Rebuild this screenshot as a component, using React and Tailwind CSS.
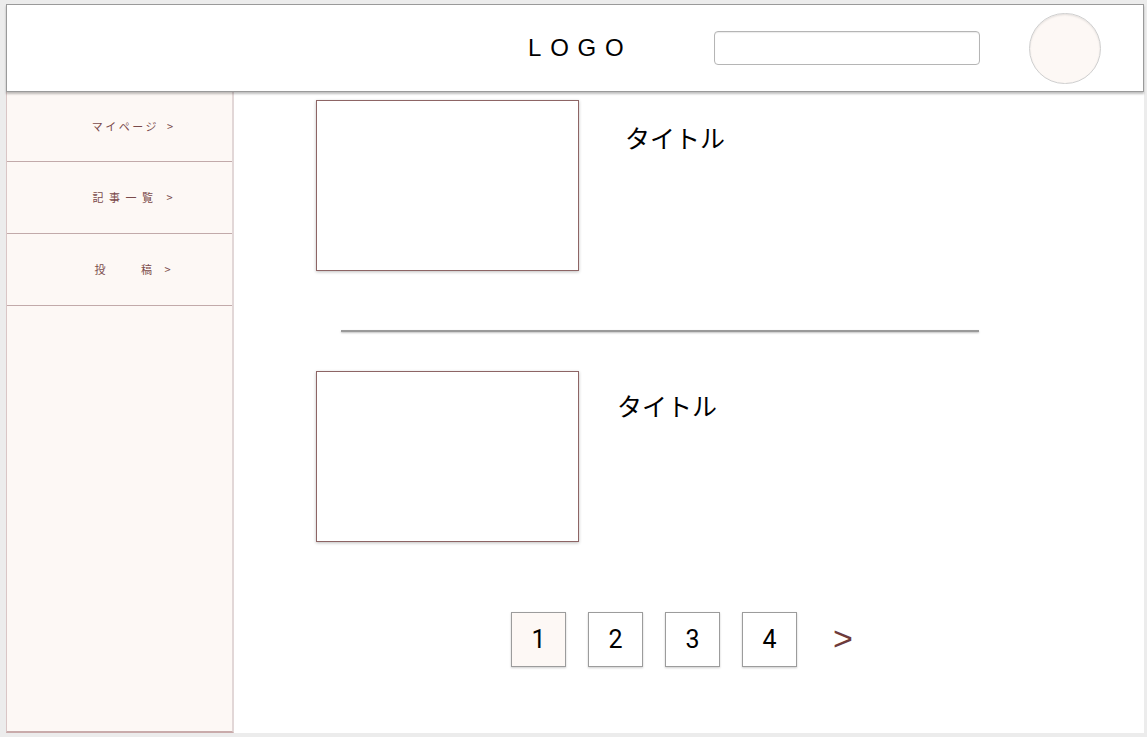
import React from 'react';

const menu = [
    { label: 'マイページ', h: 'h-[70px]', track: 'tracking-[2.5px]' },
    { label: '記事一覧', h: 'h-[72px]', track: 'tracking-[5.5px]' },
    { label: '投\u3000\u3000稿', h: 'h-[72px]', track: 'tracking-[4.5px]' },
];

const posts = [
    { id: 1, titleClass: 'ml-[46px] mt-[20px]' },
    { id: 2, titleClass: 'ml-[38px] mt-[17px]' },
];

const Header = () => (
    <header className="h-[88px] bg-white border border-[#9a9a9a] shadow-[0_2px_2px_rgba(0,0,0,0.25)] flex items-center relative z-10">
        <div className="ml-[521px] w-[160px] text-[24px] tracking-[8.8px] text-black font-['Liberation_Sans',sans-serif]">
            LOGO
        </div>
        <input
            type="text"
            className="ml-[26px] w-[266px] h-[34px] rounded-[4px] border border-[#b5b5b5] bg-white shadow-[inset_0_1px_1px_rgba(0,0,0,0.08)] outline-none"
        />
        <div className="ml-[49px] w-[72px] h-[71px] rounded-full bg-[#fdf8f5] border border-[#cfcfcf] shadow-[inset_0_1px_2px_rgba(0,0,0,0.1)]" />
    </header>
);

const Sidebar = () => (
    <aside className="w-[228px] shrink-0 bg-[#fdf8f5] border-r-2 border-r-[#e2d7d7] border-l border-l-[#d9c6c6] border-b-2 border-b-[#c9abab] flex flex-col">
        {menu.map((item) => (
            <div
                key={item.label}
                className={`${item.h} border-b border-[#c2aaaa] flex items-center justify-center pl-[26px] text-[11px] text-[#7a4a4a] font-['Noto_Sans_CJK_JP',sans-serif]`}
            >
                <span className={item.track}>{item.label}</span>
                <span className="ml-[8px]">&gt;</span>
            </div>
        ))}
    </aside>
);

const PostRow = ({ titleClass }) => (
    <div className="flex items-start">
        <div className="w-[263px] h-[171px] border border-[#8d6565] bg-white shadow-[0_1px_3px_rgba(0,0,0,0.25)]" />
        <h2 className={`${titleClass} text-[25px] text-black font-['Noto_Sans_CJK_JP',sans-serif] leading-[34px]`}>
            タイトル
        </h2>
    </div>
);

const Pagination = () => (
    <div className="flex items-center pl-[277px] mt-[70px] font-['Roboto',sans-serif]">
        {[1, 2, 3, 4].map((n) => (
            <div
                key={n}
                className={`w-[55px] h-[55px] mr-[22px] flex items-center justify-center border border-[#9c9c9c] shadow-[0_1px_2px_rgba(0,0,0,0.2)] text-[25px] text-black ${n === 1 ? 'bg-[#fdf8f5]' : 'bg-white'}`}
            >
                {n}
            </div>
        ))}
        <span className="ml-[14px] text-[34px] leading-none text-[#6e3b3b] font-['Liberation_Sans',sans-serif] -mt-[4px]">&gt;</span>
    </div>
);

export default function App() {
    return (
        <div className="w-[1147px] h-[737px] bg-[#ececec] pt-[4px] pl-[6px] overflow-hidden">
            <div className="w-[1138px] h-[729px] flex flex-col bg-white">
                <Header />
                <div className="flex flex-1 min-h-0">
                    <Sidebar />
                    <main className="flex-1 pt-[8px]">
                        <div className="pl-[82px]">
                            <PostRow titleClass={posts[0].titleClass} />
                        </div>
                        <div className="ml-[107px] w-[638px] h-[2px] bg-[#9a9a9a] shadow-[0_1px_2px_rgba(0,0,0,0.25)] mt-[59px] mb-[39px]" />
                        <div className="pl-[82px]">
                            <PostRow titleClass={posts[1].titleClass} />
                        </div>
                        <Pagination />
                    </main>
                </div>
            </div>
        </div>
    );
}
